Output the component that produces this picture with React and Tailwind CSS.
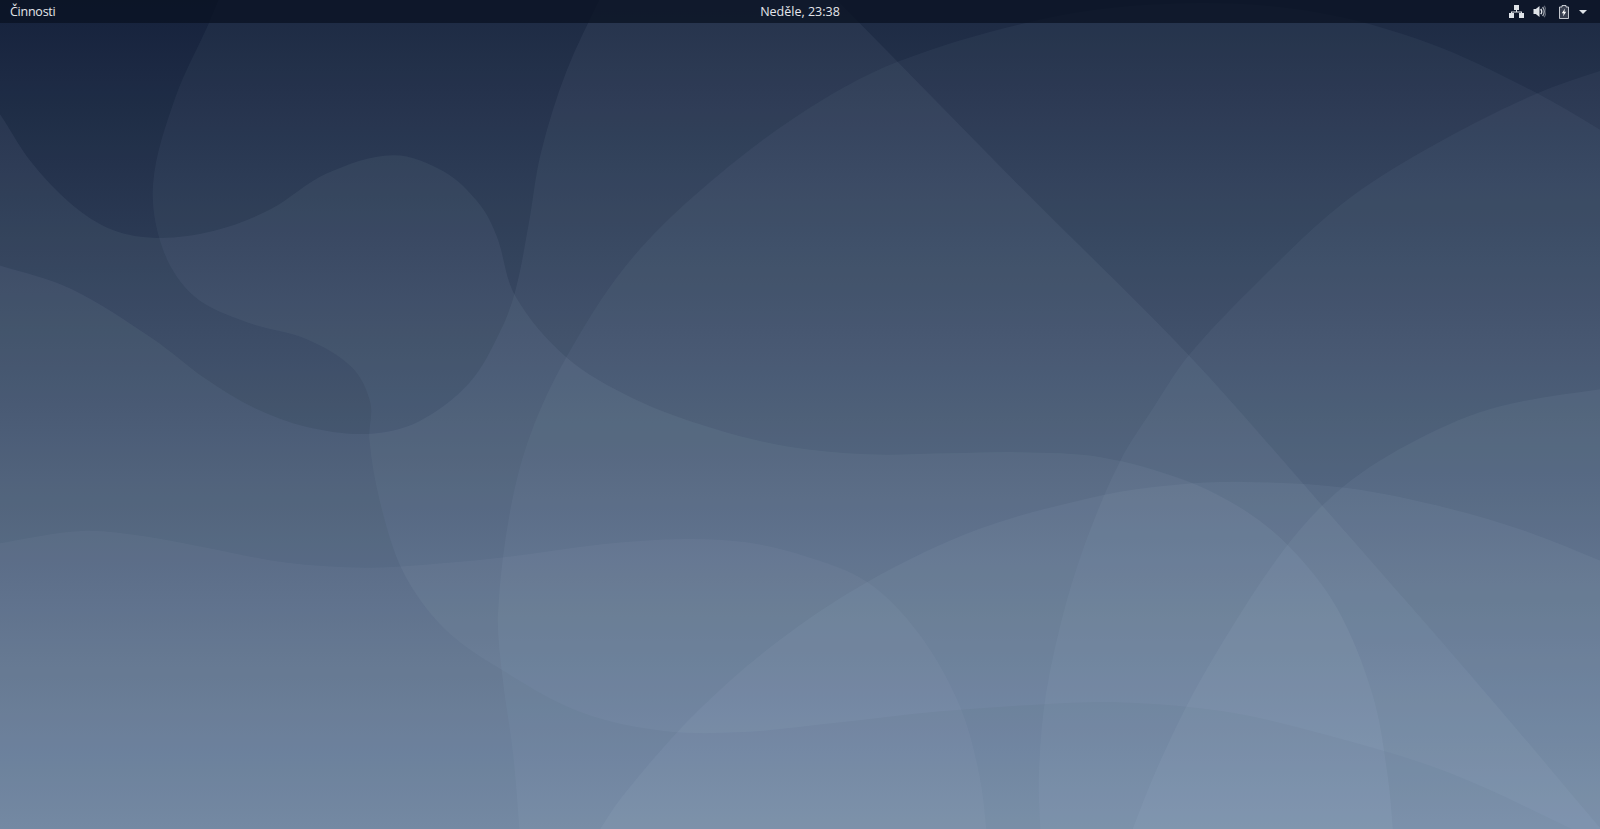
const unit = (a, b) => {
  const dx = b[0] - a[0];
  const dy = b[1] - a[1];
  const l = Math.hypot(dx, dy) || 1;
  return [dx / l, dy / l];
};

const spline = (pts, close = []) => {
  let d = `M${pts[0][0]} ${pts[0][1]}`;
  for (let i = 0; i < pts.length - 1; i++) {
    const p0 = pts[i - 1] || pts[i];
    const p1 = pts[i];
    const p2 = pts[i + 1];
    const p3 = pts[i + 2] || p2;
    const len = Math.hypot(p2[0] - p1[0], p2[1] - p1[1]) / 3;
    const t1 = unit(p0, p2);
    const t2 = unit(p1, p3);
    const c1 = [p1[0] + t1[0] * len, p1[1] + t1[1] * len];
    const c2 = [p2[0] - t2[0] * len, p2[1] - t2[1] * len];
    d += `C${c1[0]} ${c1[1]} ${c2[0]} ${c2[1]} ${p2[0]} ${p2[1]}`;
  }
  close.forEach((p) => (d += `L${p[0]} ${p[1]}`));
  return d + "Z";
};

const shapes = [
  { o: 0.045, pts: [[222, -20], [205, 22], [172, 95], [150, 180], [160, 245], [190, 290], [240, 315], [300, 332], [345, 360], [363, 395], [362, 430], [372, 490], [395, 560], [435, 615], [490, 655], [570, 698], [650, 716], [730, 717], [820, 708], [920, 697], [1020, 690], [1100, 688], [1200, 697], [1300, 720], [1420, 757], [1568, 825]], close: [[1600, 825], [1600, -20]] },
  { o: 0.05, pts: [[-20, 255], [0, 260], [70, 283], [150, 332], [200, 370], [250, 400], [300, 418], [360, 425], [410, 413], [460, 375], [490, 325], [505, 285], [518, 220], [530, 150], [555, 70], [592, -10]], close: [[1600, -10], [1600, 830], [-20, 830]] },
  { o: 0.055, pts: [[-20, 85], [0, 112], [30, 158], [70, 200], [110, 225], [155, 233], [210, 226], [265, 205], [320, 170], [385, 152], [435, 168], [470, 200], [487, 232], [505, 290], [555, 350], [620, 390], [700, 420], [770, 437], [850, 445], [930, 444], [1000, 443], [1080, 448], [1160, 470], [1220, 500], [1265, 537], [1310, 595], [1345, 680], [1360, 760], [1366, 825]], close: [[-20, 825]] },
  { o: 0.045, pts: [[510, 825], [503, 740], [492, 660], [488, 600], [500, 500], [520, 425], [555, 350], [612, 262], [680, 192], [779, 115], [881, 60], [1040, 15], [1175, 3], [1290, 12], [1400, 42], [1500, 88], [1590, 140]], close: [[1600, 140], [1600, 825]] },
  { o: 0.05, pts: [[815, -5], [840, 20], [1000, 183], [1165, 348], [1300, 500], [1440, 660], [1580, 825]], close: [[-20, 825], [-20, -5]] },
  { o: 0.043, pts: [[1590, 62], [1505, 92], [1400, 145], [1316, 199], [1235, 274], [1165, 348], [1130, 400], [1098, 451], [1068, 520], [1045, 590], [1025, 680], [1018, 760], [1020, 825]], close: [[1600, 825], [1600, 62]] },
  { o: 0.05, pts: [[580, 825], [610, 780], [680, 700], [760, 630], [850, 570], [960, 518], [1080, 485], [1150, 475], [1220, 472], [1320, 478], [1420, 498], [1500, 522], [1590, 558]], close: [[1600, 825]] },
  { o: 0.05, pts: [[1105, 825], [1135, 750], [1180, 660], [1257, 540], [1316, 477], [1390, 430], [1470, 398], [1590, 378]], close: [[1600, 825]] },
  { o: 0.04, pts: [[-20, 537], [0, 532], [80, 520], [140, 525], [200, 536], [280, 551], [360, 556], [430, 552], [500, 545], [590, 533], [670, 528], [730, 531], [790, 545], [850, 570], [900, 620], [940, 690], [960, 760], [968, 825]], close: [[-20, 825]] },
];

const Wallpaper = () => (
  <svg className="absolute inset-0 w-full h-full" viewBox="0 0 1568 812" preserveAspectRatio="none">
    <defs>
      <linearGradient id="base" x1="0" y1="0" x2="0" y2="1">
        <stop offset="0" stopColor="#0b1731" />
        <stop offset="0.5" stopColor="#33445e" />
        <stop offset="1" stopColor="#5f7591" />
      </linearGradient>
    </defs>
    <rect width="1568" height="812" fill="url(#base)" />
    {shapes.map((s, i) => (
      <path key={i} d={spline(s.pts, s.close)} fill="#dbe6fa" fillOpacity={s.o} />
    ))}
  </svg>
);

const NetworkIcon = () => (
  <svg width="15" height="13" viewBox="0 0 15 13" fill="#dfe3e8" className="block">
    <rect x="5" y="0" width="5" height="5" />
    <rect x="0" y="8" width="5" height="5" />
    <rect x="10" y="8" width="5" height="5" />
    <path d="M7 5h1v1.5h5v1.5h-1V7.5H3V8H2V6.5h5z" />
  </svg>
);

const VolumeIcon = () => (
  <svg width="13" height="13" viewBox="0 0 13 13" className="block">
    <path d="M0.5 4h2.3L6.5 1v11L2.8 9H0.5z" fill="#dfe3e8" />
    <path d="M7.8 3.8c1.1 1.6 1.1 3.8 0 5.4" stroke="#dfe3e8" strokeWidth="1.4" fill="none" />
    <path d="M9.6 2c2 2.8 2 6.2 0 9" stroke="#dfe3e8" strokeOpacity="0.75" strokeWidth="1.3" fill="none" />
    <path d="M11.2 0.8c2.2 3.4 2.2 8 0 11.4" stroke="#dfe3e8" strokeOpacity="0.4" strokeWidth="1.1" fill="none" />
  </svg>
);

const BatteryIcon = () => (
  <svg width="10" height="14" viewBox="0 0 10 14" className="block">
    <path d="M3 0.5h4v1.5h2.5v11.5H0.5V2H3z" fill="#dfe3e8" fillOpacity="0.2" stroke="#dfe3e8" strokeOpacity="0.85" strokeWidth="1" />
    <path d="M6 3.5L2.8 8.3h1.9L4 11.5l3.2-4.8H5.3z" fill="#ffffff" />
  </svg>
);

const Caret = () => (
  <svg width="8" height="4" viewBox="0 0 8 4" className="block">
    <path d="M0 0h8L4 4z" fill="#dfe3e8" />
  </svg>
);

export default function App() {
  return (
    <div className="relative w-screen h-screen overflow-hidden font-['Open_Sans',sans-serif]">
      <Wallpaper />
      <header className="relative grid grid-cols-[1fr_auto_1fr] items-center h-[23px] bg-[#0a1122]/75 text-[#e4e6ea] text-[12.5px] font-medium">
        <div className="pl-[10px] pt-[1px] tracking-[-0.25px]">Činnosti</div>
        <div className="pt-[1px]">Neděle, 23:38</div>
        <div className="flex items-center justify-end pr-[13px]">
          <NetworkIcon />
          <span className="w-[9px]" />
          <VolumeIcon />
          <span className="w-[13px]" />
          <BatteryIcon />
          <span className="w-[10px]" />
          <Caret />
        </div>
      </header>
    </div>
  );
}
